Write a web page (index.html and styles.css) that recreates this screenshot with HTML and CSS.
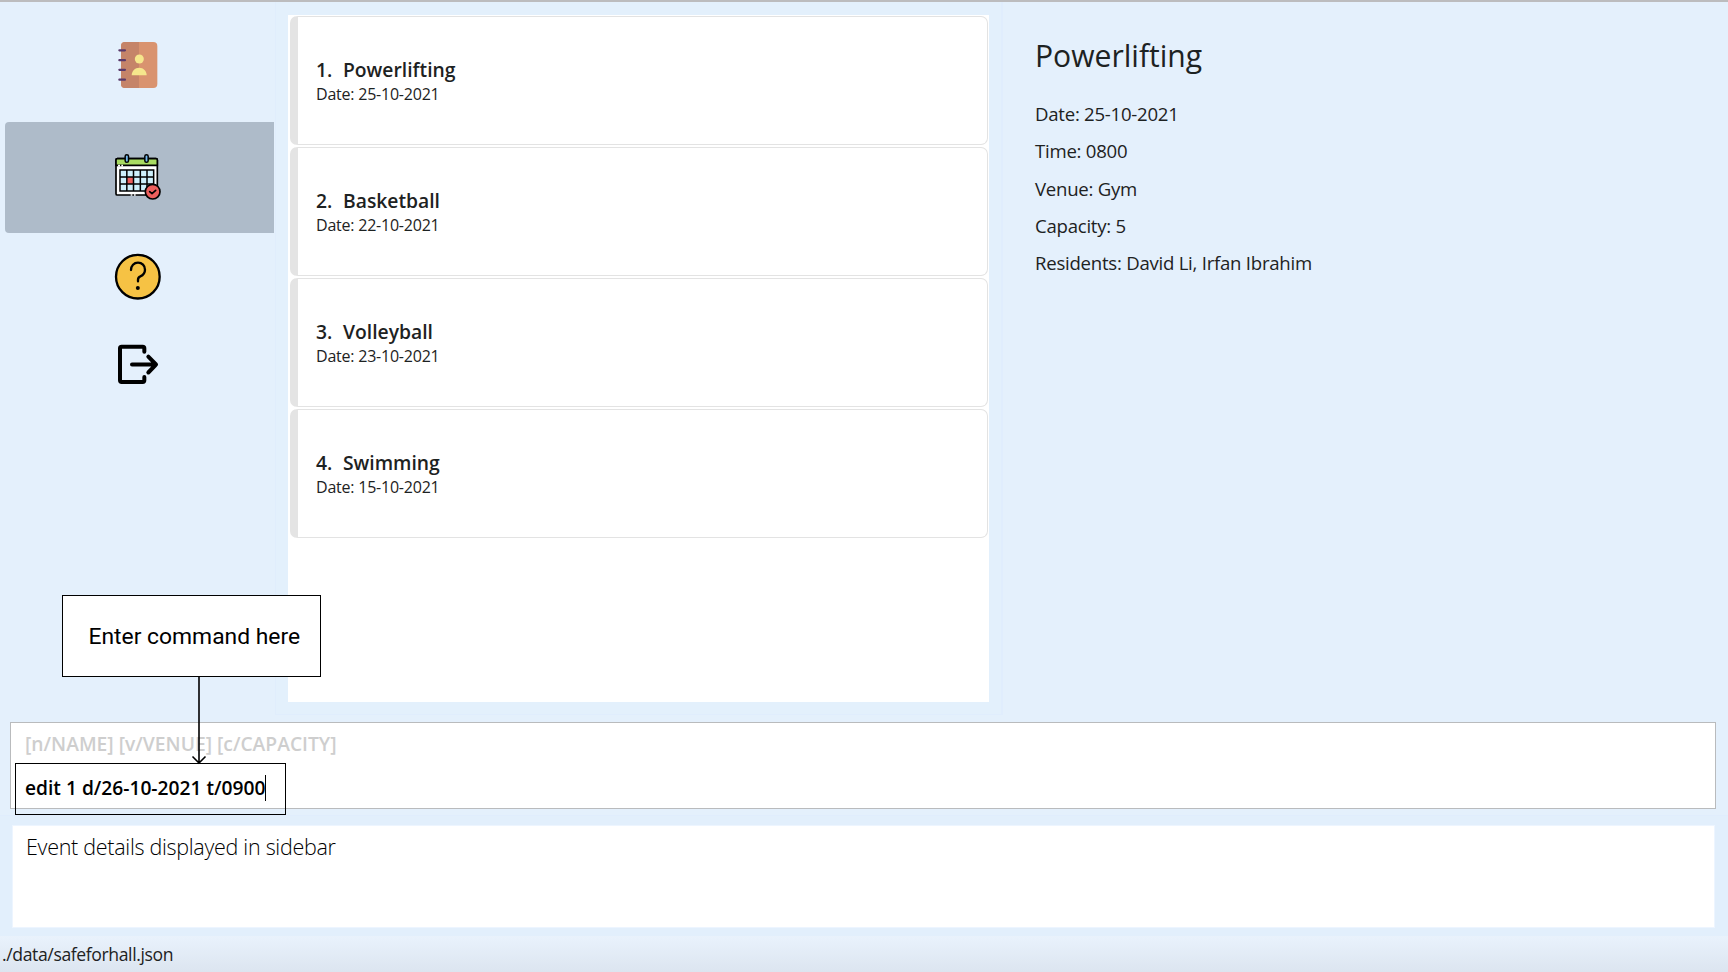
FILE: index.html
```html
<!DOCTYPE html>
<html lang="en">
<head>
<meta charset="utf-8">
<title>SafeForHall</title>
<link rel="stylesheet" href="styles.css">
</head>
<body>
<div class="window">
  <main class="main">
    <nav class="sidebar">
      <div class="tab tab-contacts">
        <svg class="icon" viewBox="0 0 240 210">
          <rect x="63" y="36" width="109" height="138" rx="12" fill="#d9936f"/>
          <path d="M117 36H75a12 12 0 0 0-12 12v114a12 12 0 0 0 12 12h42z" fill="#c58469"/>
          <circle cx="118" cy="87" r="13.500" fill="#f5e68c"/>
          <path d="M95 136c0-13 10-23 22.500-23s22.500 10 22.500 23z" fill="#f5e68c"/>
          <path d="M58 61h17M58 90.500h17M58 119.500h17M58 149h17" stroke="#5b3a6b" stroke-width="6.500" stroke-linecap="round"/>
        </svg>
      </div>
      <div class="tab tab-events selected">
        <svg class="icon" viewBox="0 0 240 210">
          <rect x="48" y="56" width="124" height="109" rx="4" fill="#fff" stroke="#000" stroke-width="5"/>
          <path d="M48 76V60a4 4 0 0 1 4-4h116a4 4 0 0 1 4 4v16z" fill="#a9dc63" stroke="#000" stroke-width="5"/>
          <path d="M54 77h6M64 77h5M92 165h5M102 165h5" stroke="#fff" stroke-width="5"/>
          <rect x="60" y="90" width="101" height="63" fill="#cdeffb"/>
          <rect x="81" y="111" width="20" height="21" fill="#ec5f5d"/>
          <path d="M60 90h101v63H60zM80.500 90v63M100.500 90v63M121 90v63M141 90v63M60 111h101M60 132h101" fill="none" stroke="#000" stroke-width="4.500"/>
          <rect x="75.500" y="44" width="10" height="23" rx="5" fill="#74b9ee" stroke="#000" stroke-width="4.500"/>
          <rect x="134.500" y="44" width="10" height="23" rx="5" fill="#74b9ee" stroke="#000" stroke-width="4.500"/>
          <circle cx="158" cy="155" r="22" fill="#ec5f5d" stroke="#000" stroke-width="5"/>
          <path d="M149 155l7 6 11-10" fill="none" stroke="#000" stroke-width="5" stroke-linecap="round" stroke-linejoin="round"/>
        </svg>
      </div>
      <div class="tab tab-help">
        <svg class="icon" viewBox="0 0 240 210">
          <circle cx="113.500" cy="110" r="65.500" fill="#f6c244" stroke="#000" stroke-width="7"/>
          <path d="M93 90c0-13 9-22 21-22s21 9 21 21-7 17-14 20c-5 2-7 5-7 10v5" fill="none" stroke="#000" stroke-width="7" stroke-linecap="round"/>
          <circle cx="113.500" cy="144" r="6" fill="#000"/>
        </svg>
      </div>
      <div class="tab tab-exit">
        <svg class="icon" viewBox="0 0 240 210">
          <path d="M133 65V55q0-5-5-5H65q-5 0-5 5v96q0 5 5 5h63q5 0 5-5V141" fill="none" stroke="#000" stroke-width="12" stroke-linecap="round"/>
          <path d="M96 103.500H168M145 80l23 23.500-23 24" fill="none" stroke="#000" stroke-width="12" stroke-linecap="round" stroke-linejoin="round"/>
        </svg>
      </div>
    </nav>

    <section class="list-pane">
      <div class="list">
        <article class="card"><h2 class="card-title"><span class="num">1.</span>Powerlifting</h2><p class="card-date">Date: 25-10-2021</p></article>
        <article class="card"><h2 class="card-title"><span class="num">2.</span>Basketball</h2><p class="card-date">Date: 22-10-2021</p></article>
        <article class="card"><h2 class="card-title"><span class="num">3.</span>Volleyball</h2><p class="card-date">Date: 23-10-2021</p></article>
        <article class="card"><h2 class="card-title"><span class="num">4.</span>Swimming</h2><p class="card-date">Date: 15-10-2021</p></article>
      </div>
    </section>

    <aside class="details">
      <h1 class="details-title">Powerlifting</h1>
      <p class="row">Date: 25-10-2021</p>
      <p class="row">Time: 0800</p>
      <p class="row">Venue: Gym</p>
      <p class="row">Capacity: 5</p>
      <p class="row">Residents: David Li, Irfan Ibrahim</p>
    </aside>
  </main>

  <section class="command-pane">
    <div class="command-box">
      <div class="hint"><span>[n/NAME] [v/VENUE] [c/CAPACITY]</span></div>
      <div class="entry"><span>edit 1 d/26-10-2021 t/0900</span><i class="caret"></i></div>
    </div>
  </section>

  <section class="result-pane">
    <div class="result"><span>Event details displayed in sidebar</span></div>
  </section>

  <footer class="status"><span>./data/safeforhall.json</span></footer>

  <div class="callout"><span>Enter command here</span></div>
  <svg class="arrow" viewBox="0 0 16 88"><path d="M8 0v86M1.500 79.500L8 86l6.500-6.500" fill="none" stroke="#000" stroke-width="1.600"/></svg>
  <div class="entry-outline"></div>
</div>
</body>
</html>
```
FILE: styles.css
```css
* { box-sizing: border-box; margin: 0; padding: 0; }

body {
  width: 1728px;
  height: 972px;
  overflow: hidden;
  font-family: "Open Sans", sans-serif;
  color: #1d2222;
  background: #e4f0fc;
}

.window {
  position: relative;
  height: 972px;
  display: flex;
  flex-direction: column;
  border-top: 2px solid #bcbcbe;
  white-space: nowrap;
}

.main { display: flex; height: 713px; }

.sidebar { width: 275px; padding-left: 5px; }
.tab { width: 269px; padding-left: 95px; }
.icon { display: block; width: 80px; height: 70px; }
.tab-contacts { height: 120px; padding-top: 28px; }
.tab-events { height: 111px; padding-top: 18px; }
.tab-help { height: 89px; padding-top: 7px; }
.tab-exit { height: 90px; padding-top: 8px; }
.selected { background: #aebbc9; border-radius: 4px 0 0 4px; }

.list-pane {
  width: 728px;
  padding: 13px 12px 12px 12px;
  border-left: 1px solid #e0edfc;
  border-right: 2px solid #e0edfd;
  border-bottom: 1px solid #e0edfd;
  background: #e3f0fc;
}
.list {
  height: 687px;
  padding: 1px 1px 0 2px;
  display: flex;
  flex-direction: column;
  gap: 2px;
  background: #fff;
}
.card {
  height: 129px;
  padding: 41px 0 0 18px;
  border: 1px solid #e3e3e3;
  border-left: 8px solid #e4e4e4;
  border-radius: 7px;
}
.card-title { font-size: 19.300px; font-weight: 600; line-height: 24px; }
.num { display: inline-block; width: 27px; }
.card-date { font-size: 16px; line-height: 24px; letter-spacing: -0.220px; }

.details { padding: 33px 0 0 32px; }
.details-title { font-size: 30.100px; font-weight: 400; line-height: 41px; margin-bottom: 19px; }
.row { font-size: 18.600px; line-height: 37.250px; letter-spacing: -0.250px; }

.command-pane { height: 100px; padding: 7px 12px 6px 10px; }
.command-box {
  height: 87px;
  padding-left: 14px;
  border: 1px solid #b9bbbd;
  background: #fff;
  font-size: 19.250px;
  font-weight: 600;
  line-height: 43px;
}
.hint { color: #cecece; height: 43px; line-height: 41px; }
.entry { display: flex; align-items: center; height: 43px; color: #000; font-size: 19.200px; }
.caret { width: 1px; height: 26px; background: #000; }

.result-pane {
  height: 121px;
  padding: 9px 13px 9px 12px;
  border-top: 1px solid #e0edfd;
  background: #e2effc;
}
.result {
  height: 103px;
  padding: 6px 0 0 13px;
  border: 1px solid #edf5ff;
  background: #fff;
  font-size: 21.500px;
  font-weight: 300;
  line-height: 30px;
  letter-spacing: -0.290px;
  color: #000;
}

.status {
  height: 36px;
  padding-left: 2px;
  background: linear-gradient(#e9f2fc, #dce5f0);
  font-size: 17.600px;
  line-height: 36px;
  letter-spacing: -0.390px;
}

/* Annotation drawn over the application window */
.callout {
  position: absolute;
  left: 62px;
  top: 593px;
  width: 259px;
  height: 82px;
  padding-left: 25.500px;
  border: 1px solid #000;
  background: #fff;
  font: 22.850px/81px Roboto, sans-serif;
  color: #000;
}
.arrow { position: absolute; left: 191px; top: 675px; width: 16px; height: 88px; }
.entry-outline {
  position: absolute;
  left: 15px;
  top: 761px;
  width: 271px;
  height: 52px;
  border: 1px solid #000;
}
```
